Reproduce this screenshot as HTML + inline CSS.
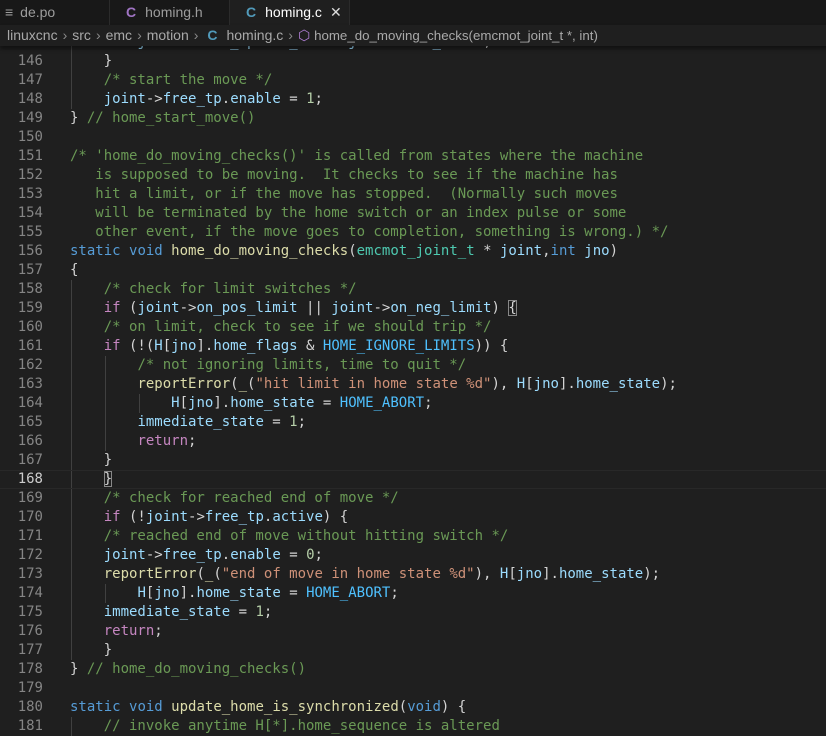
<!DOCTYPE html>
<html><head><meta charset="utf-8"><style>
body{margin:0;width:826px;height:724px;background:#1f1f1f;overflow:hidden;position:relative;font-family:"Liberation Sans",sans-serif}
.tabs{position:absolute;left:0;top:0;width:826px;height:25px;background:#181818;z-index:3}
.tab{position:absolute;top:0;height:25px;font-size:14px;line-height:24px;color:#9d9d9d;border-right:1px solid #2b2b2b}
.tab.act{background:#1f1f1f;color:#fff;height:25px}
.ci{font-weight:bold;margin-right:9px}
.bc{position:absolute;left:0;top:25px;width:826px;height:21px;background:#1f1f1f;z-index:3;font-size:14px;line-height:21px;color:#a9a9a9;padding-left:7px;white-space:nowrap;box-shadow:0 3px 4px rgba(0,0,0,.45)}
.bc .s{margin:0 5px;color:#8a8a8a}
.code{position:absolute;left:0;top:33px;width:826px;font-family:"DejaVu Sans Mono","Liberation Mono",monospace;font-size:14px;z-index:1}
.l{position:relative;height:19px;line-height:19px;white-space:pre;color:#d4d4d4}
.n{position:absolute;left:0;width:43px;text-align:right;color:#858585}
.t{position:absolute;left:70px}
.cur{border-top:1px solid #282828;border-bottom:1px solid #282828;height:17px;line-height:17px}
.cur .n{color:#ccc}
.g{position:absolute;top:0;width:1px;height:19px;background:#404040}
.c{color:#6a9955}.k{color:#569cd6}.p{color:#c586c0}.v{color:#9cdcfe}.f{color:#dcdcaa}.s2{color:#ce9178}.m{color:#4fc1ff}.num{color:#b5cea8}.ty{color:#4ec9b0}
</style></head><body>
<div class="tabs">
<div class="tab" style="left:0;width:110px;padding-left:5px;box-sizing:border-box"><span style="margin-right:7px">≡</span>de.po</div>
<div class="tab" style="left:110px;width:120px;padding-left:16px;box-sizing:border-box"><span class="ci" style="color:#a074c4">C</span>homing.h</div>
<div class="tab act" style="left:230px;width:120px;padding-left:16px;box-sizing:border-box"><span class="ci" style="color:#519aba">C</span>homing.c<span style="position:absolute;left:100px;color:#ddd">✕</span></div>
</div>
<div class="bc">linuxcnc<span class="s">›</span>src<span class="s">›</span>emc<span class="s">›</span>motion<span class="s">›</span> <span class="ci" style="color:#519aba">C</span>homing.c<span class="s">›</span><span style="color:#b180d7">⬡</span> <span style="font-size:13.3px">home_do_moving_checks(emcmot_joint_t *, int)</span></div>
<div class="code">
<div class="l"><span class="n">145</span><span class="g" style="left:71px"></span><span class="t">        <span class="v">joint</span>-&gt;<span class="v">free_tp</span>.<span class="v">max_vel</span> = <span class="v">joint</span>-&gt;<span class="v">vel_limit</span>;</span></div>
<div class="l"><span class="n">146</span><span class="g" style="left:71px"></span><span class="t">    }</span></div>
<div class="l"><span class="n">147</span><span class="g" style="left:71px"></span><span class="t">    <span class="c">/* start the move */</span></span></div>
<div class="l"><span class="n">148</span><span class="g" style="left:71px"></span><span class="t">    <span class="v">joint</span>-&gt;<span class="v">free_tp</span>.<span class="v">enable</span> = <span class="num">1</span>;</span></div>
<div class="l"><span class="n">149</span><span class="t">} <span class="c">// home_start_move()</span></span></div>
<div class="l"><span class="n">150</span></div>
<div class="l"><span class="n">151</span><span class="t"><span class="c">/* 'home_do_moving_checks()' is called from states where the machine</span></span></div>
<div class="l"><span class="n">152</span><span class="t"><span class="c">   is supposed to be moving.  It checks to see if the machine has</span></span></div>
<div class="l"><span class="n">153</span><span class="t"><span class="c">   hit a limit, or if the move has stopped.  (Normally such moves</span></span></div>
<div class="l"><span class="n">154</span><span class="t"><span class="c">   will be terminated by the home switch or an index pulse or some</span></span></div>
<div class="l"><span class="n">155</span><span class="t"><span class="c">   other event, if the move goes to completion, something is wrong.) */</span></span></div>
<div class="l"><span class="n">156</span><span class="t"><span class="k">static</span> <span class="k">void</span> <span class="f">home_do_moving_checks</span>(<span class="ty">emcmot_joint_t</span> * <span class="v">joint</span>,<span class="k">int</span> <span class="v">jno</span>)</span></div>
<div class="l"><span class="n">157</span><span class="t">{</span></div>
<div class="l"><span class="n">158</span><span class="g" style="left:71px"></span><span class="t">    <span class="c">/* check for limit switches */</span></span></div>
<div class="l"><span class="n">159</span><span class="g" style="left:71px"></span><span class="t">    <span class="p">if</span> (<span class="v">joint</span>-&gt;<span class="v">on_pos_limit</span> || <span class="v">joint</span>-&gt;<span class="v">on_neg_limit</span>) <span style="outline:1px solid #888;outline-offset:-1px">{</span></span></div>
<div class="l"><span class="n">160</span><span class="g" style="left:71px"></span><span class="t">    <span class="c">/* on limit, check to see if we should trip */</span></span></div>
<div class="l"><span class="n">161</span><span class="g" style="left:71px"></span><span class="t">    <span class="p">if</span> (!(<span class="v">H</span>[<span class="v">jno</span>].<span class="v">home_flags</span> &amp; <span class="m">HOME_IGNORE_LIMITS</span>)) {</span></div>
<div class="l"><span class="n">162</span><span class="g" style="left:71px"></span><span class="g" style="left:105px"></span><span class="t">        <span class="c">/* not ignoring limits, time to quit */</span></span></div>
<div class="l"><span class="n">163</span><span class="g" style="left:71px"></span><span class="g" style="left:105px"></span><span class="t">        <span class="f">reportError</span>(<span class="f">_</span>(<span class="s2">"hit limit in home state %d"</span>), <span class="v">H</span>[<span class="v">jno</span>].<span class="v">home_state</span>);</span></div>
<div class="l"><span class="n">164</span><span class="g" style="left:71px"></span><span class="g" style="left:105px"></span><span class="g" style="left:139px"></span><span class="t">            <span class="v">H</span>[<span class="v">jno</span>].<span class="v">home_state</span> = <span class="m">HOME_ABORT</span>;</span></div>
<div class="l"><span class="n">165</span><span class="g" style="left:71px"></span><span class="g" style="left:105px"></span><span class="t">        <span class="v">immediate_state</span> = <span class="num">1</span>;</span></div>
<div class="l"><span class="n">166</span><span class="g" style="left:71px"></span><span class="g" style="left:105px"></span><span class="t">        <span class="p">return</span>;</span></div>
<div class="l"><span class="n">167</span><span class="g" style="left:71px"></span><span class="t">    }</span></div>
<div class="l cur"><span class="n">168</span><span class="g" style="left:71px;height:17px"></span><span class="t">    <span style="outline:1px solid #888;outline-offset:-1px">}</span></span></div>
<div class="l"><span class="n">169</span><span class="g" style="left:71px"></span><span class="t">    <span class="c">/* check for reached end of move */</span></span></div>
<div class="l"><span class="n">170</span><span class="g" style="left:71px"></span><span class="t">    <span class="p">if</span> (!<span class="v">joint</span>-&gt;<span class="v">free_tp</span>.<span class="v">active</span>) {</span></div>
<div class="l"><span class="n">171</span><span class="g" style="left:71px"></span><span class="t">    <span class="c">/* reached end of move without hitting switch */</span></span></div>
<div class="l"><span class="n">172</span><span class="g" style="left:71px"></span><span class="t">    <span class="v">joint</span>-&gt;<span class="v">free_tp</span>.<span class="v">enable</span> = <span class="num">0</span>;</span></div>
<div class="l"><span class="n">173</span><span class="g" style="left:71px"></span><span class="t">    <span class="f">reportError</span>(<span class="f">_</span>(<span class="s2">"end of move in home state %d"</span>), <span class="v">H</span>[<span class="v">jno</span>].<span class="v">home_state</span>);</span></div>
<div class="l"><span class="n">174</span><span class="g" style="left:71px"></span><span class="g" style="left:105px"></span><span class="t">        <span class="v">H</span>[<span class="v">jno</span>].<span class="v">home_state</span> = <span class="m">HOME_ABORT</span>;</span></div>
<div class="l"><span class="n">175</span><span class="g" style="left:71px"></span><span class="t">    <span class="v">immediate_state</span> = <span class="num">1</span>;</span></div>
<div class="l"><span class="n">176</span><span class="g" style="left:71px"></span><span class="t">    <span class="p">return</span>;</span></div>
<div class="l"><span class="n">177</span><span class="g" style="left:71px"></span><span class="t">    }</span></div>
<div class="l"><span class="n">178</span><span class="t">} <span class="c">// home_do_moving_checks()</span></span></div>
<div class="l"><span class="n">179</span></div>
<div class="l"><span class="n">180</span><span class="t"><span class="k">static</span> <span class="k">void</span> <span class="f">update_home_is_synchronized</span>(<span class="k">void</span>) {</span></div>
<div class="l"><span class="n">181</span><span class="g" style="left:71px"></span><span class="t">    <span class="c">// invoke anytime H[*].home_sequence is altered</span></span></div>
</div>
</body></html>
